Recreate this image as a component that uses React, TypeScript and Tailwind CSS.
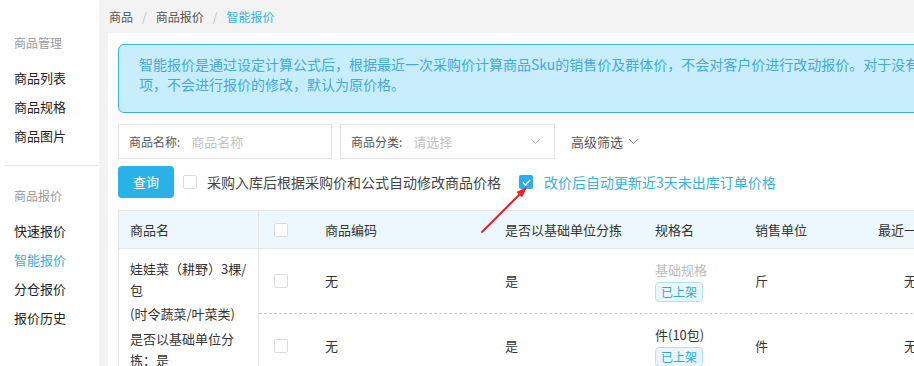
import React from "react";

const font = "font-['Noto_Sans_CJK_SC','Noto_Sans',sans-serif]";

const menu = [
  { title: "商品管理", items: ["商品列表", "商品规格", "商品图片"] },
  { title: "商品报价", items: ["快速报价", "智能报价", "分仓报价", "报价历史"] },
];

const rows = [
  { code: "无", sort: "是", spec: "基础规格", specMuted: true, unit: "斤", last: "无" },
  { code: "无", sort: "是", spec: "件(10包)", specMuted: false, unit: "件", last: "无" },
];

function Checkbox({ checked }: { checked?: boolean }) {
  if (checked) {
    return (
      <span className="flex h-[14px] w-[14px] shrink-0 items-center justify-center rounded-[2px] bg-[#2ab0e8]">
        <svg width="9" height="7" viewBox="0 0 9 7" fill="none">
          <path d="M1 3.5 L3.5 6 L8 1" stroke="#fff" strokeWidth="1.4" />
        </svg>
      </span>
    );
  }
  return <span className="block h-[14px] w-[14px] shrink-0 rounded-[2px] border border-[#dcdcdc] bg-white" />;
}

function Chevron({ color = "#999" }: { color?: string }) {
  return (
    <svg width="11" height="7" viewBox="0 0 11 7" fill="none">
      <path d="M1 1 L5.5 5.5 L10 1" stroke={color} strokeWidth="1" />
    </svg>
  );
}

export default function App() {
  return (
    <div className={`relative flex h-[366px] w-[914px] overflow-hidden bg-[#f3f3f3] text-[#333] ${font}`}>
      {/* sidebar */}
      <aside className="w-[99px] shrink-0 bg-white">
        {menu.map((group, gi) => (
          <div
            key={group.title}
            className={gi === 0 ? "pt-[28px] pb-[15px]" : "ml-[4px] border-t border-[#e8e8e8] pt-[15px]"}
          >
            <div className={gi === 0 ? "" : "-ml-[4px]"}>
              <p className="pl-[14px] text-[12px] leading-[29px] text-[#999]">{group.title}</p>
              <ul className="mt-[6px]">
                {group.items.map((it) => (
                  <li
                    key={it}
                    className={`pl-[14px] text-[13px] leading-[29px] ${it === "智能报价" ? "text-[#3aaee6]" : "text-[#222]"}`}
                  >
                    {it}
                  </li>
                ))}
              </ul>
            </div>
          </div>
        ))}
      </aside>

      {/* main */}
      <main className="flex min-w-0 flex-1 flex-col">
        <div className="flex h-[33px] shrink-0 items-center gap-[9px] pl-[10px] text-[12px]">
          <span className="text-[#555]">商品</span>
          <span className="text-[#c0c0c0]">/</span>
          <span className="text-[#555]">商品报价</span>
          <span className="text-[#c0c0c0]">/</span>
          <span className="text-[#3aaee6]">智能报价</span>
        </div>

        <div className="ml-[9px] w-[1000px] flex-1 bg-white px-[10px] pt-[11px]">
          {/* notice */}
          <div className="rounded-[6px] border border-[#34b3ea] bg-[#c8eefd] pt-[9px] pb-[18px] pl-[20px] text-[14px] leading-[20px] whitespace-nowrap text-[#45a8e0]">
            智能报价是通过设定计算公式后，根据最近一次采购价计算商品Sku的销售价及群体价，不会对客户价进行改动报价。对于没有采购价的商品选
            <br />
            项，不会进行报价的修改，默认为原价格。
          </div>

          {/* filters */}
          <div className="mt-[11px] flex items-center gap-[8px]">
            <div className="flex h-[35px] w-[214px] items-center border border-[#e3e3e3] pl-[10px]">
              <span className="text-[12px] text-[#555]">商品名称:</span>
              <span className="ml-[11px] text-[13px] text-[#c2c2c2]">商品名称</span>
            </div>
            <div className="flex h-[35px] w-[215px] items-center border border-[#e3e3e3] pl-[10px] pr-[13px]">
              <span className="text-[12px] text-[#555]">商品分类:</span>
              <span className="ml-[11px] text-[13px] text-[#c2c2c2]">请选择</span>
              <span className="ml-auto">
                <Chevron color="#bbb" />
              </span>
            </div>
            <div className="ml-[8px] flex items-center gap-[5px] text-[13px] text-[#555]">
              高级筛选
              <Chevron color="#888" />
            </div>
          </div>

          <div className="mt-[7px] flex items-center">
            <button className="h-[32px] w-[56px] rounded-[4px] bg-[#29b1e8] text-[13px] text-white">查询</button>
            <span className="ml-[9px]">
              <Checkbox />
            </span>
            <span className="ml-[10px] text-[14px] text-[#444]">采购入库后根据采购价和公式自动修改商品价格</span>
            <span className="ml-[18px]">
              <Checkbox checked />
            </span>
            <span className="ml-[11px] text-[14px] text-[#3aaee6]">改价后自动更新近3天未出库订单价格</span>
          </div>

          {/* table */}
          <div className="mt-[12px] flex border-t border-l border-[#e6e6e6]">
            <div className="w-[140px] shrink-0 border-r border-[#e6e6e6]">
              <div className="flex h-[38px] items-center border-b border-[#e6e6e6] bg-[#ecf8fd] pl-[11px] text-[13px] text-[#333]">
                商品名
              </div>
              <div className="pt-[9px] pl-[11px] text-[13px] leading-[21px] text-[#333]">
                <p>
                  娃娃菜（耕野）3棵/
                  <br />包
                </p>
                <p className="mt-[3px]">(时令蔬菜/叶菜类)</p>
                <p className="mt-[4px]">
                  是否以基础单位分
                  <br />
                  拣：是
                </p>
              </div>
            </div>

            <div className="flex-1">
              <div className="flex h-[38px] items-center border-b border-[#e6e6e6] bg-[#ecf8fd] text-[13px] text-[#333]">
                <div className="w-[51px] pl-[15px]">
                  <Checkbox />
                </div>
                <div className="w-[180px] pl-[15px]">商品编码</div>
                <div className="w-[150px] pl-[15px]">是否以基础单位分拣</div>
                <div className="w-[100px] pl-[15px]">规格名</div>
                <div className="w-[123px] pl-[15px]">销售单位</div>
                <div className="flex-1 pl-[15px] whitespace-nowrap">最近一次采购价</div>
              </div>
              {rows.map((r, i) => (
                <div key={i} className="flex h-[65px] items-center border-b border-dashed border-[#c8c8c8] text-[13px] text-[#333]">
                  <div className="w-[51px] pl-[15px]">
                    <Checkbox />
                  </div>
                  <div className="w-[180px] pl-[15px]">{r.code}</div>
                  <div className="w-[150px] pl-[15px]">{r.sort}</div>
                  <div className="flex w-[100px] flex-col items-start gap-[3px] pl-[15px]">
                    <span className={r.specMuted ? "text-[#bbb]" : "text-[#333]"}>{r.spec}</span>
                    <span className="rounded-[4px] border border-[#b5e1f6] bg-[#e9f7fd] px-[5px] text-[12px] leading-[18px] text-[#2ea7e0]">
                      已上架
                    </span>
                  </div>
                  <div className="w-[123px] pl-[15px]">{r.unit}</div>
                  <div className="flex-1 pl-[41px]">{r.last}</div>
                </div>
              ))}
            </div>
          </div>
        </div>
      </main>

      {/* annotation arrow */}
      <svg className="absolute left-[470px] top-[180px]" width="70" height="60" viewBox="0 0 70 60">
        <line x1="12" y1="52" x2="50" y2="14" stroke="#e8232a" strokeWidth="2" strokeLinecap="round" />
        <polygon points="57,7 52,17.6 46.4,12" fill="#e8232a" />
      </svg>
    </div>
  );
}
